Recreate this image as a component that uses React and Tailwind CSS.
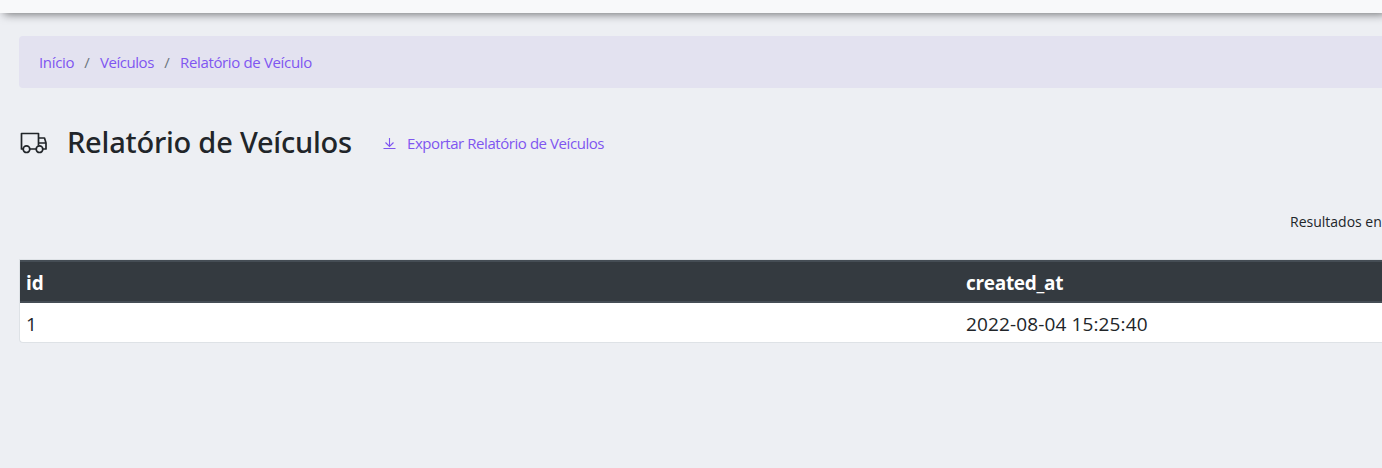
const Slash = () => <span className="w-[26px] text-center text-[#6c757d]">/</span>;

export default function App() {
  return (
    <div className="h-[468px] w-full overflow-hidden bg-[#edeff3] font-['Open_Sans',sans-serif] whitespace-nowrap text-[#212529]">
      <header className="h-[13px] bg-[#f8f9fa] shadow-[4px_1px_10px_rgba(0,0,0,0.55)]" />
      <main className="pt-[23px] pl-[19px]">
        <nav className="flex h-[52px] items-center rounded-l bg-[#e3e2f0] pl-5 text-[15px] text-[#7f56f0]">
          <a className="w-[35px] tracking-[-0.35px]">Início</a>
          <Slash />
          <a className="w-[54px] tracking-[-0.45px]">Veículos</a>
          <Slash />
          <a className="tracking-[-0.35px]">Relatório de Veículo</a>
        </nav>
        <div className="mt-[33px] flex h-[42px] items-center">
          <svg className="ml-px h-[27px] w-[27px]" viewBox="0 0 27 27" fill="none" stroke="currentColor" strokeWidth="1.7" strokeLinejoin="round">
            <path d="M3.300 20H1.500V4.500h17v12M9.800 20h6.400M18.500 9h6l1.500 5v6h-3.200M18.500 14H26" />
            <circle cx="6.500" cy="20.200" r="3.300" />
            <circle cx="19.500" cy="20.200" r="3.300" />
          </svg>
          <h1 className="ml-5 w-[285px] font-['Noto_Sans',sans-serif] text-[29px] font-medium tracking-[-0.22px]">Relatório de Veículos</h1>
          <a className="ml-[31px] flex items-center pt-[2px] text-[15px] tracking-[-0.44px] text-[#7f56f0]">
            <svg className="h-[13px] w-[13px]" viewBox="0 0 13 13" fill="none" stroke="currentColor" strokeWidth="1.100">
              <path d="M6.500 1v8.500M2.500 5.500l4 4 4-4M.5 11.500h12" />
            </svg>
            <span className="ml-[11px]">Exportar Relatório de Veículos</span>
          </a>
        </div>
        <p className="mt-[47px] ml-[1271px] h-6 text-[14px] leading-6">Resultados en</p>
        <div className="mt-[25px] overflow-hidden rounded-bl border border-r-0 border-[#dee2e6] bg-white text-[19px]">
          <div className="grid h-[43px] grid-cols-[940px_1fr] items-center border-y-2 border-[#454d55] bg-[#343a40] pt-[4px] pl-[6px] font-bold text-white">
            <span>id</span>
            <span className="tracking-[-0.3px]">created_at</span>
          </div>
          <div className="grid h-[39px] grid-cols-[940px_1fr] items-center pt-[4px] pl-[6px]">
            <span>1</span>
            <span className="tracking-[0.13px]">2022-08-04 15:25:40</span>
          </div>
        </div>
      </main>
    </div>
  );
}
